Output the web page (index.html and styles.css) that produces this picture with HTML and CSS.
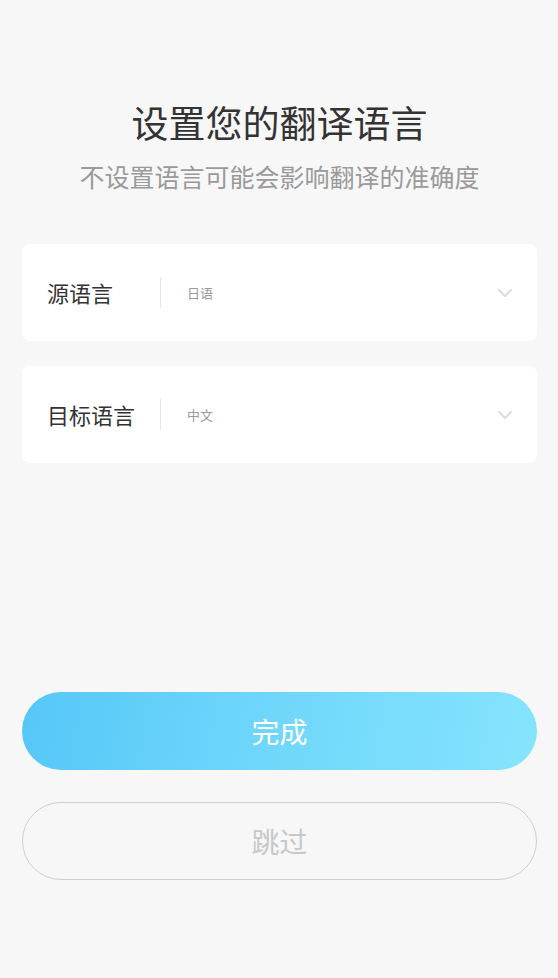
FILE: index.html
```html
<!DOCTYPE html>
<html lang="zh-CN">
<head>
<meta charset="utf-8">
<title>设置您的翻译语言</title>
<link rel="stylesheet" href="styles.css">
</head>
<body>
<main class="page">
  <header class="head">
    <h1 class="title">设置您的翻译语言</h1>
    <p class="subtitle">不设置语言可能会影响翻译的准确度</p>
  </header>
  <section class="cards">
    <div class="card">
      <span class="label">源语言</span>
      <span class="divider"></span>
      <span class="value">日语</span>
      <svg class="chev" width="16" height="10" viewBox="0 0 16 10"><path d="M2 2 L8 8 L14 2" fill="none" stroke="#dcdcdc" stroke-width="2" stroke-linecap="round" stroke-linejoin="round"/></svg>
    </div>
    <div class="card">
      <span class="label">目标语言</span>
      <span class="divider"></span>
      <span class="value">中文</span>
      <svg class="chev" width="16" height="10" viewBox="0 0 16 10"><path d="M2 2 L8 8 L14 2" fill="none" stroke="#dcdcdc" stroke-width="2" stroke-linecap="round" stroke-linejoin="round"/></svg>
    </div>
  </section>
  <section class="actions">
    <button class="btn primary">完成</button>
    <button class="btn ghost">跳过</button>
  </section>
</main>
</body>
</html>
```
FILE: styles.css
```css
html, body {
  margin: 0;
  padding: 0;
  background: #f7f7f7;
}
body {
  font-family: "Noto Sans CJK SC", "Noto Sans", sans-serif;
}
.page {
  padding: 100px 21px 0 22px;
  display: flex;
  flex-direction: column;
}
.head {
  text-align: center;
}
.title {
  margin: 0;
  font-size: 37px;
  line-height: 44px;
  font-weight: 400;
  color: #333;
}
.subtitle {
  margin: 17px 0 0;
  font-size: 25px;
  line-height: 30px;
  color: #9a9a9a;
}
.cards {
  margin-top: 53px;
  display: flex;
  flex-direction: column;
  gap: 25px;
}
.card {
  height: 97px;
  background: #fff;
  border-radius: 8px;
  display: flex;
  align-items: center;
  padding: 0 24px 0 25px;
}
.label {
  width: 113px;
  font-size: 22px;
  line-height: 30px;
  color: #333;
  margin-top: -2px;
}
.divider {
  width: 1px;
  height: 31px;
  background: #e6e6e6;
}
.value {
  margin-left: 26px;
  font-size: 13px;
  color: #9a9a9a;
  flex: 1;
}
.chev {
  display: block;
}
.actions {
  margin-top: 229px;
  display: flex;
  flex-direction: column;
  gap: 32px;
}
.btn {
  height: 78px;
  border-radius: 39px;
  font-family: "Noto Sans CJK SC", "Noto Sans", sans-serif;
  font-size: 28px;
  padding: 0;
  cursor: pointer;
}
.primary {
  border: none;
  color: #fff;
  background: linear-gradient(100deg, #55c7f7 0%, #6ed6fb 45%, #86e4fd 100%);
}
.ghost {
  background: transparent;
  border: 1px solid #cfcfcf;
  color: #c8c8c8;
}
```
